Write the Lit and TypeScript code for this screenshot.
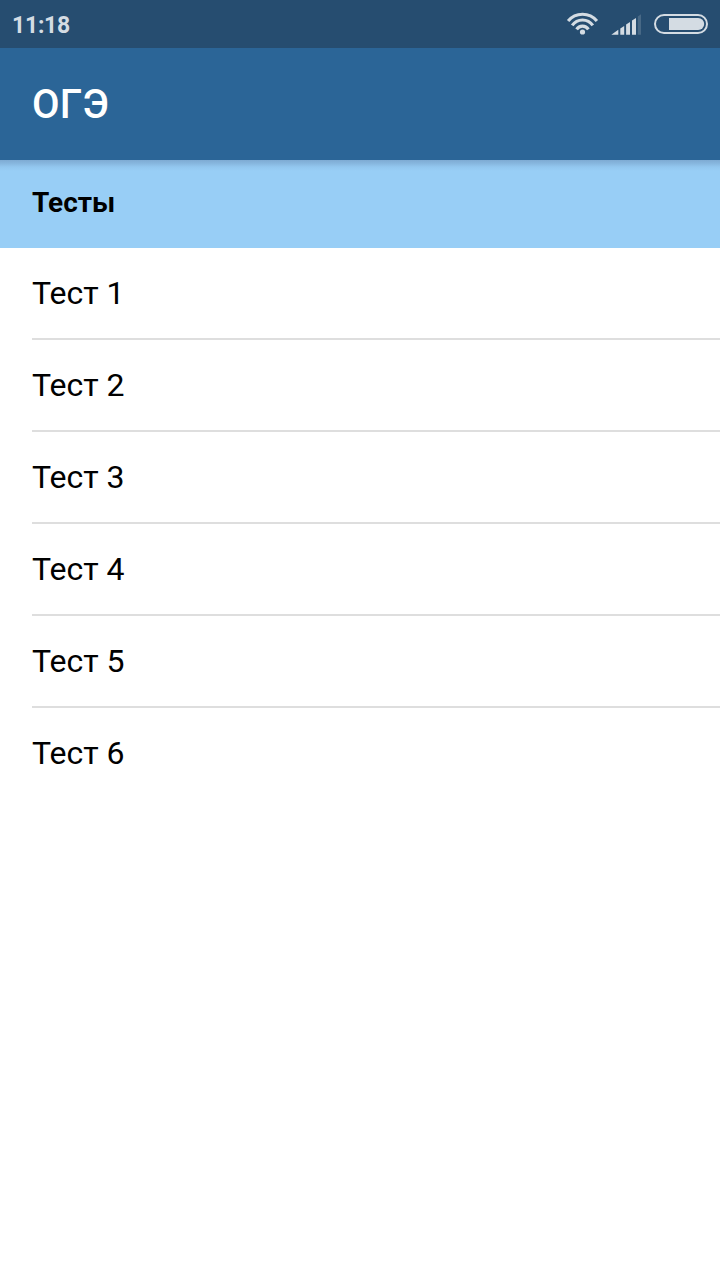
import { LitElement, html, css } from "lit";
import { customElement, property } from "lit/decorators.js";

@customElement("status-bar")
class StatusBar extends LitElement {
  @property() time = "";

  static styles = css`
    :host {
      display: flex;
      align-items: center;
      justify-content: space-between;
      height: 48px;
      padding-left: 12px;
      box-sizing: border-box;
      background: #264d70;
      color: #d4dce3;
    }
    .time {
      font-size: 23px;
      font-weight: 700;
      letter-spacing: -0.25px;
      line-height: 44px;
      padding-top: 4px;
    }
    .icons {
      display: block;
    }
  `;

  render() {
    return html`
      <span class="time">${this.time}</span>
      <svg class="icons" width="160" height="48" viewBox="560 0 160 48">
        <g fill="none" stroke="#d4dce3" stroke-width="3.1">
          <path d="M568.1 20.9A18.8 18.8 0 0 1 596.9 20.9" />
          <path d="M572.2 25.4A12.6 12.6 0 0 1 592.8 25.4" />
          <path d="M576.6 29.4A7 7 0 0 1 588.4 29.4" />
        </g>
        <circle cx="582.5" cy="32" r="2.6" fill="#d4dce3" />
        <g fill="#d4dce3">
          <path d="M611.3 34.7L618.3 29.8V34.7Z" />
          <path d="M620.3 28.6L624.2 25.9V34.7H620.3Z" />
          <path d="M626.1 24.6L630 21.9V34.7H626.1Z" />
          <path d="M632 20.6L636 17.9V34.7H632Z" />
          <path d="M637.8 16.6L641 14.3V34.7H637.8Z" opacity="0.2" />
        </g>
        <rect x="655" y="15" width="52" height="18" rx="9" fill="none" stroke="#d4dce3" stroke-width="2" />
        <path d="M669 18H698.2A6 6 0 0 1 698.2 30H669Z" fill="#d4dce3" />
      </svg>
    `;
  }
}

@customElement("test-list")
class TestList extends LitElement {
  @property({ type: Array }) items: string[] = [];

  static styles = css`
    .heading {
      height: 88px;
      box-sizing: border-box;
      padding: 0 32px 4px;
      display: flex;
      align-items: center;
      background:
        linear-gradient(rgba(60, 80, 120, 0.28), rgba(60, 80, 120, 0.2) 3px, rgba(60, 80, 120, 0.06) 7px, rgba(60, 80, 120, 0) 11px),
        #98cef6;
      font-size: 28px;
      font-weight: 700;
    }
    .row {
      height: 92px;
      box-sizing: border-box;
      margin-left: 32px;
      display: flex;
      align-items: center;
      border-bottom: 2px solid #dedede;
      font-size: 32px;
    }
    .row:last-child {
      border-bottom-color: transparent;
    }
  `;

  render() {
    return html`
      <div class="heading">Тесты</div>
      ${this.items.map((item) => html`<div class="row">${item}</div>`)}
    `;
  }
}

@customElement("app-root")
class AppRoot extends LitElement {
  static styles = css`
    :host {
      display: block;
      min-height: 1280px;
      background: #fff;
      color: #000;
      font-family: Roboto, "Noto Sans", sans-serif;
    }
    .toolbar {
      height: 112px;
      padding: 0 32px;
      display: flex;
      align-items: center;
      background: #2b6597;
      color: #fff;
      font-size: 40px;
      font-weight: 500;
      letter-spacing: 0.3px;
    }
  `;

  private tests = [1, 2, 3, 4, 5, 6].map((n) => `Тест ${n}`);

  render() {
    return html`
      <status-bar time="11:18"></status-bar>
      <div class="toolbar">ОГЭ</div>
      <test-list .items=${this.tests}></test-list>
    `;
  }
}
